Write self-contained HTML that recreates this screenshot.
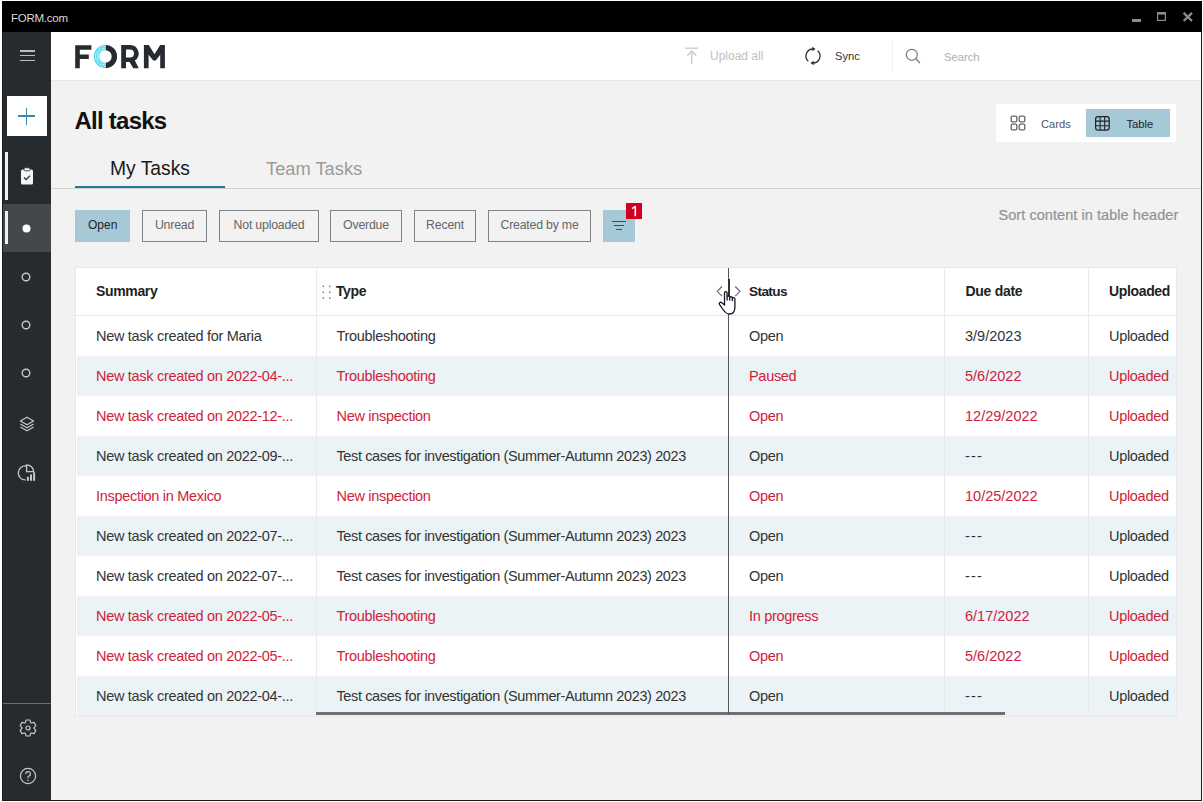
<!DOCTYPE html>
<html><head><meta charset="utf-8">
<style>
*{box-sizing:border-box;margin:0;padding:0}
html,body{width:1203px;height:802px;overflow:hidden;background:#fff;font-family:"Liberation Sans",sans-serif;position:relative}
.a{position:absolute}
.t{position:absolute;white-space:nowrap;line-height:1}
svg{position:absolute;overflow:visible}
</style></head><body>
<div class="a" style="left:2px;top:1px;width:1200px;height:800px;background:#f2f2f2;border:1px solid #1a1a1a"></div>
<div class="a" style="left:2px;top:1px;width:1200px;height:31px;background:#000;"></div>
<div class="t" style="left:11px;top:12.87px;font-size:11.5px;color:#d8d8d8;font-weight:400;letter-spacing:-0.25px">FORM.com</div>
<div class="a" style="left:1131.5px;top:18.8px;width:9px;height:3.1px;background:#8c8c8c;"></div>
<svg style="left:1157px;top:12px" width="9" height="9"><rect x="0.6" y="0.6" width="7.8" height="7.8" fill="none" stroke="#8c8c8c" stroke-width="1.2"/><rect x="0" y="0" width="9" height="2.6" fill="#8c8c8c"/></svg>
<svg style="left:1182px;top:12px" width="12" height="10"><path d="M1.6 0.9 L10 9 M10 0.9 L1.6 9" stroke="#8c8c8c" stroke-width="2.3"/></svg>
<div class="a" style="left:3px;top:32px;width:48px;height:768px;background:#262b2f;"></div>
<div class="a" style="left:19.7px;top:50.1px;width:15.7px;height:1.6px;background:#bdbdbd;"></div>
<div class="a" style="left:19.7px;top:54.9px;width:15.7px;height:1.6px;background:#bdbdbd;"></div>
<div class="a" style="left:19.7px;top:59.9px;width:15.7px;height:1.6px;background:#bdbdbd;"></div>
<div class="a" style="left:7px;top:96px;width:40px;height:40px;background:#fff;"></div>
<div class="a" style="left:18px;top:115.2px;width:17px;height:1.6px;background:#3a8aa5;"></div>
<div class="a" style="left:25.7px;top:108px;width:1.6px;height:16.6px;background:#3a8aa5;"></div>
<div class="a" style="left:5px;top:152px;width:3px;height:48px;background:#f0f0f0;"></div>
<svg style="left:20px;top:167px" width="14" height="18"><rect x="1" y="2.5" width="12" height="15" rx="1.5" fill="#f4f4f4"/><rect x="4" y="0.8" width="6" height="3" rx="1" fill="#f4f4f4" stroke="#262b2f" stroke-width="0.8"/><path d="M4 10.5 L6.2 12.6 L10 8.6" fill="none" stroke="#262b2f" stroke-width="1.3"/></svg>
<div class="a" style="left:3px;top:204px;width:48px;height:48px;background:#43484b;"></div>
<div class="a" style="left:5px;top:211px;width:3px;height:33px;background:#f0f0f0;"></div>
<svg style="left:22px;top:224px" width="9" height="9"><circle cx="4.5" cy="4.5" r="4" fill="#fff"/></svg>
<svg style="left:21px;top:271.5px" width="10" height="10"><circle cx="5" cy="5" r="3.8" fill="none" stroke="#c8c8c8" stroke-width="1.4"/></svg>
<svg style="left:21px;top:320.0px" width="10" height="10"><circle cx="5" cy="5" r="3.8" fill="none" stroke="#c8c8c8" stroke-width="1.4"/></svg>
<svg style="left:21px;top:368.0px" width="10" height="10"><circle cx="5" cy="5" r="3.8" fill="none" stroke="#c8c8c8" stroke-width="1.4"/></svg>
<svg style="left:18px;top:416px" width="18" height="17"><g fill="none" stroke="#c8c8c8" stroke-width="1.2" stroke-linejoin="round"><path d="M9 1.2 L15.6 5 L9 8.8 L2.4 5 Z"/><path d="M2.4 8 L9 11.8 L15.6 8"/><path d="M2.4 10.9 L9 14.7 L15.6 10.9"/></g></svg>
<svg style="left:18px;top:464px" width="20" height="18"><g fill="none" stroke="#c8c8c8" stroke-width="1.3"><path d="M8.4 2 A7 7 0 1 0 7.6 15.9"/><path d="M8.6 0.8 V7.6 H15.6 A7 7 0 0 0 8.6 0.8 Z"/></g><g fill="#c8c8c8"><rect x="8.9" y="12.8" width="2" height="4"/><rect x="12" y="10.5" width="2" height="6.3"/><rect x="15.1" y="8.3" width="2" height="8.5"/></g></svg>
<div class="a" style="left:3px;top:703px;width:48px;height:1px;background:#6a6e71;"></div>
<svg style="left:19px;top:719px" width="18" height="18"><path d="M6.28 3.65 L7.16 1.01 L10.84 1.01 L11.72 3.65 L12.27 3.97 L15.00 3.41 L16.84 6.60 L14.99 8.69 L14.99 9.31 L16.84 11.40 L15.00 14.59 L12.27 14.03 L11.72 14.35 L10.84 16.99 L7.16 16.99 L6.28 14.35 L5.73 14.03 L3.00 14.59 L1.16 11.40 L3.01 9.31 L3.01 8.69 L1.16 6.60 L3.00 3.41 L5.73 3.97 Z" fill="none" stroke="#c8c8c8" stroke-width="1.2" stroke-linejoin="round"/><circle cx="9" cy="9" r="2" fill="none" stroke="#c8c8c8" stroke-width="1.2"/></svg>
<svg style="left:19px;top:767px" width="18" height="18"><circle cx="9" cy="9" r="7.6" fill="none" stroke="#c8c8c8" stroke-width="1.2"/><path d="M6.8 7 A2.3 2.3 0 1 1 9.6 9.2 Q9 9.6 9 10.4 L9 11.3" fill="none" stroke="#c8c8c8" stroke-width="1.2"/><circle cx="9" cy="13.3" r="0.8" fill="#c8c8c8"/></svg>
<div class="a" style="left:51px;top:32px;width:1150px;height:48px;background:#fff;"></div>
<div class="a" style="left:51px;top:80px;width:1150px;height:1px;background:#e7e9e9;"></div>
<svg style="left:75px;top:44.5px" width="92" height="25">
<path d="M0.2 0.2 H16.4 V4.8 H4.8 V9.5 H13.8 V14.1 H4.8 V23.2 H0.2 Z" fill="#262b2f"/>
<path d="M30.5 -0.1 A11.6 11.6 0 0 1 30.5 23.1 L30.5 17.7 A6.2 6.2 0 0 0 30.5 5.3 Z" fill="#262b2f"/>
<path d="M30.5 -0.1 A11.6 11.6 0 0 0 30.5 23.1 L30.5 17.7 A6.2 6.2 0 0 1 30.5 5.3 Z" fill="#3dd5ea"/>
<path d="M30.5 1.4 A10.1 10.1 0 0 0 30.5 21.6" fill="none" stroke="#fff" stroke-width="0.7"/>
<path d="M30.5 3.1 A8.4 8.4 0 0 0 30.5 19.9" fill="none" stroke="#fff" stroke-width="0.7"/>
<path d="M30.5 4.7 A6.8 6.8 0 0 0 30.5 18.3" fill="none" stroke="#fff" stroke-width="0.6"/>
<path d="M46.2 0 H55 A8.5 8.5 0 0 1 59.8 15.6 L63.8 23.2 H58.2 L54.6 17 H51 V23.2 H46.2 Z M51 4.6 V12.6 H55 A4 4 0 0 0 55 4.6 Z" fill="#262b2f" fill-rule="evenodd"/>
<path d="M68.9 23.2 V0 H73.8 L79.5 9.3 L85.2 0 H89.9 V23.2 H85.2 V9.8 L80.8 15.4 H78.2 L73.6 9.8 V23.2 Z" fill="#262b2f"/>
</svg>
<svg style="left:685px;top:47px" width="14" height="18"><path d="M0.5 1.2 H13" stroke="#c4c4c4" stroke-width="1.2"/><path d="M6.8 4 V17" stroke="#c4c4c4" stroke-width="1.2"/><path d="M2.3 8.5 L6.8 4 L11.3 8.5" fill="none" stroke="#c4c4c4" stroke-width="1.2"/></svg>
<div class="t" style="left:710px;top:50.14px;font-size:12px;color:#c0c0c0;font-weight:400;">Upload all</div>
<svg style="left:804px;top:46px" width="19" height="20"><g fill="none" stroke="#333" stroke-width="1.3"><path d="M9 3 A7 7 0 0 0 4.3 15.2"/><path d="M13.6 4.7 A7 7 0 0 1 9 17"/></g><path d="M8.2 0.7 L11.6 3 L8.2 5.3 Z" fill="#333"/><path d="M9.8 14.7 L6.4 17 L9.8 19.3 Z" fill="#333"/></svg>
<div class="t" style="left:835px;top:50.82px;font-size:11.2px;color:#333;font-weight:400;">Sync</div>
<div class="a" style="left:892px;top:40px;width:1px;height:32px;background:#efefef;"></div>
<svg style="left:905px;top:48px" width="17" height="17"><circle cx="6.8" cy="6.8" r="5.5" fill="none" stroke="#777" stroke-width="1.2"/><path d="M10.8 10.8 L15 15" stroke="#777" stroke-width="1.3"/></svg>
<div class="t" style="left:944px;top:51.72px;font-size:11.2px;color:#aeaeae;font-weight:400;">Search</div>
<div class="t" style="left:74.5px;top:108.68px;font-size:24px;color:#111;font-weight:700;letter-spacing:-0.75px">All tasks</div>
<div class="a" style="left:996px;top:104px;width:180px;height:38px;background:#fff;"></div>
<div class="a" style="left:1086px;top:109px;width:84px;height:28px;background:#a5c9d7;"></div>
<svg style="left:1010px;top:115px" width="16" height="16"><g fill="none" stroke="#666" stroke-width="1.3"><rect x="1.2" y="1.2" width="5.6" height="5.6" rx="1.3"/><rect x="9.2" y="1.2" width="5.6" height="5.6" rx="1.3"/><rect x="1.2" y="9.2" width="5.6" height="5.6" rx="1.3"/><rect x="9.2" y="9.2" width="5.6" height="5.6" rx="1.3"/></g></svg>
<div class="t" style="left:1041px;top:118.82px;font-size:11.2px;color:#555;font-weight:400;">Cards</div>
<svg style="left:1094.5px;top:115.5px" width="15" height="15"><g fill="none" stroke="#222" stroke-width="1.25"><rect x="0.6" y="0.6" width="13.6" height="13.6" rx="2.6"/><path d="M5.1 0.6 V14.2 M9.7 0.6 V14.2 M0.6 5.1 H14.2 M0.6 9.7 H14.2" stroke-width="1.1"/></g></svg>
<div class="t" style="left:1126.5px;top:118.82px;font-size:11.2px;color:#222;font-weight:400;">Table</div>
<div class="t" style="left:110px;top:158.96px;font-size:19.3px;color:#1a1a1a;font-weight:400;">My Tasks</div>
<div class="t" style="left:266px;top:159.81px;font-size:18.3px;color:#9a9a9a;font-weight:400;">Team Tasks</div>
<div class="a" style="left:51px;top:188px;width:1150px;height:1px;background:#d0d0d0;"></div>
<div class="a" style="left:75px;top:186px;width:150px;height:2.2px;background:#1f7b9b;"></div>
<div class="a" style="left:75px;top:210px;width:55px;height:32px;background:#a5c9d7;"></div>
<div class="t" style="left:88px;top:219.44px;font-size:12px;color:#222;font-weight:400;">Open</div>
<div class="a" style="left:142px;top:210px;width:65px;height:32px;background:transparent;border:1.5px solid #808386"></div>
<div class="t" style="left:142px;top:219.19px;width:65px;text-align:center;font-size:12.3px;letter-spacing:-0.2px;color:#666">Unread</div>
<div class="a" style="left:219px;top:210px;width:100px;height:32px;background:transparent;border:1.5px solid #808386"></div>
<div class="t" style="left:219px;top:219.19px;width:100px;text-align:center;font-size:12.3px;letter-spacing:-0.2px;color:#666">Not uploaded</div>
<div class="a" style="left:330px;top:210px;width:72px;height:32px;background:transparent;border:1.5px solid #808386"></div>
<div class="t" style="left:330px;top:219.19px;width:72px;text-align:center;font-size:12.3px;letter-spacing:-0.2px;color:#666">Overdue</div>
<div class="a" style="left:414px;top:210px;width:62px;height:32px;background:transparent;border:1.5px solid #808386"></div>
<div class="t" style="left:414px;top:219.19px;width:62px;text-align:center;font-size:12.3px;letter-spacing:-0.2px;color:#666">Recent</div>
<div class="a" style="left:488px;top:210px;width:103px;height:32px;background:transparent;border:1.5px solid #808386"></div>
<div class="t" style="left:488px;top:219.19px;width:103px;text-align:center;font-size:12.3px;letter-spacing:-0.2px;color:#666">Created by me</div>
<div class="a" style="left:603px;top:210px;width:32px;height:32px;background:#a5c9d7;"></div>
<div class="a" style="left:612px;top:221.1px;width:14px;height:1.3px;background:#4a4a4a;"></div>
<div class="a" style="left:614px;top:225px;width:10px;height:1.3px;background:#4a4a4a;"></div>
<div class="a" style="left:616px;top:229px;width:6px;height:1.3px;background:#4a4a4a;"></div>
<div class="a" style="left:626px;top:203px;width:16px;height:16px;background:#d1001d;"></div>
<svg style="left:626px;top:203px" width="16" height="16"><path d="M9.3 3.3 V13.2" stroke="#fff" stroke-width="1.6"/><path d="M6 5.6 L9.4 3.4" stroke="#fff" stroke-width="1.3"/></svg>
<div class="t" style="left:998.5px;top:208.23px;font-size:14.5px;color:#8f9398;font-weight:400;-webkit-text-stroke:0.2px #8f9398;letter-spacing:0.06px">Sort content in table header</div>
<div class="a" style="left:75px;top:267px;width:1102px;height:450px;background:#fff;border:1px solid #e6e8e9"></div>
<div class="a" style="left:77px;top:356px;width:1099px;height:40px;background:#ebf3f6;"></div>
<div class="a" style="left:77px;top:436px;width:1099px;height:40px;background:#ebf3f6;"></div>
<div class="a" style="left:77px;top:516px;width:1099px;height:40px;background:#ebf3f6;"></div>
<div class="a" style="left:77px;top:596px;width:1099px;height:40px;background:#ebf3f6;"></div>
<div class="a" style="left:77px;top:676px;width:1099px;height:40px;background:#ebf3f6;"></div>
<div class="a" style="left:75px;top:315px;width:1101px;height:1px;background:#e6e9ea;"></div>
<div class="a" style="left:316px;top:268px;width:1px;height:448px;background:#e8ebec;"></div>
<div class="a" style="left:944px;top:268px;width:1px;height:448px;background:#e8ebec;"></div>
<div class="a" style="left:1088px;top:268px;width:1px;height:448px;background:#e8ebec;"></div>
<div class="t" style="left:96px;top:284.45px;font-size:14px;color:#222;font-weight:700;letter-spacing:-0.35px">Summary</div>
<svg style="left:322px;top:285px" width="10" height="14"><g fill="#8a8a8a"><rect x="0.5" y="0.5" width="1.6" height="1.6"/><rect x="7" y="0.5" width="1.6" height="1.6"/><rect x="0.5" y="6.5" width="1.6" height="1.6"/><rect x="7" y="6.5" width="1.6" height="1.6"/><rect x="0.5" y="12.3" width="1.6" height="1.6"/><rect x="7" y="12.3" width="1.6" height="1.6"/></g></svg>
<div class="t" style="left:336px;top:284.45px;font-size:14px;color:#222;font-weight:700;letter-spacing:-0.4px">Type</div>
<div class="t" style="left:749px;top:284.79px;font-size:13.6px;color:#222;font-weight:700;letter-spacing:-0.6px">Status</div>
<div class="t" style="left:965.5px;top:284.45px;font-size:14px;color:#222;font-weight:700;letter-spacing:-0.3px">Due date</div>
<div class="t" style="left:1109px;top:284.45px;font-size:14px;color:#222;font-weight:700;letter-spacing:-0.35px">Uploaded</div>
<div class="t" style="left:96px;top:328.73px;font-size:14.5px;color:#333;font-weight:400;letter-spacing:-0.3px">New task created for Maria</div>
<div class="t" style="left:336.5px;top:328.73px;font-size:14.5px;color:#333;font-weight:400;letter-spacing:-0.3px">Troubleshooting</div>
<div class="t" style="left:749px;top:328.73px;font-size:14.5px;color:#333;font-weight:400;letter-spacing:-0.3px">Open</div>
<div class="t" style="left:965px;top:328.73px;font-size:14.5px;color:#333;font-weight:400;letter-spacing:0px">3/9/2023</div>
<div class="t" style="left:1109px;top:328.73px;font-size:14.5px;color:#333;font-weight:400;letter-spacing:-0.3px">Uploaded</div>
<div class="t" style="left:96px;top:368.73px;font-size:14.5px;color:#d0213b;font-weight:400;letter-spacing:-0.3px">New task created on 2022-04-...</div>
<div class="t" style="left:336.5px;top:368.73px;font-size:14.5px;color:#d0213b;font-weight:400;letter-spacing:-0.3px">Troubleshooting</div>
<div class="t" style="left:749px;top:368.73px;font-size:14.5px;color:#d0213b;font-weight:400;letter-spacing:-0.3px">Paused</div>
<div class="t" style="left:965px;top:368.73px;font-size:14.5px;color:#d0213b;font-weight:400;letter-spacing:0px">5/6/2022</div>
<div class="t" style="left:1109px;top:368.73px;font-size:14.5px;color:#d0213b;font-weight:400;letter-spacing:-0.3px">Uploaded</div>
<div class="t" style="left:96px;top:408.73px;font-size:14.5px;color:#d0213b;font-weight:400;letter-spacing:-0.3px">New task created on 2022-12-...</div>
<div class="t" style="left:336.5px;top:408.73px;font-size:14.5px;color:#d0213b;font-weight:400;letter-spacing:-0.3px">New inspection</div>
<div class="t" style="left:749px;top:408.73px;font-size:14.5px;color:#d0213b;font-weight:400;letter-spacing:-0.3px">Open</div>
<div class="t" style="left:965px;top:408.73px;font-size:14.5px;color:#d0213b;font-weight:400;letter-spacing:0px">12/29/2022</div>
<div class="t" style="left:1109px;top:408.73px;font-size:14.5px;color:#d0213b;font-weight:400;letter-spacing:-0.3px">Uploaded</div>
<div class="t" style="left:96px;top:448.73px;font-size:14.5px;color:#333;font-weight:400;letter-spacing:-0.3px">New task created on 2022-09-...</div>
<div class="t" style="left:336.5px;top:448.73px;font-size:14.5px;color:#333;font-weight:400;letter-spacing:-0.38px">Test cases for investigation (Summer-Autumn 2023) 2023</div>
<div class="t" style="left:749px;top:448.73px;font-size:14.5px;color:#333;font-weight:400;letter-spacing:-0.3px">Open</div>
<div class="t" style="left:965px;top:448.73px;font-size:14.5px;color:#333;font-weight:400;letter-spacing:1.2px">---</div>
<div class="t" style="left:1109px;top:448.73px;font-size:14.5px;color:#333;font-weight:400;letter-spacing:-0.3px">Uploaded</div>
<div class="t" style="left:96px;top:488.73px;font-size:14.5px;color:#d0213b;font-weight:400;letter-spacing:-0.3px">Inspection in Mexico</div>
<div class="t" style="left:336.5px;top:488.73px;font-size:14.5px;color:#d0213b;font-weight:400;letter-spacing:-0.3px">New inspection</div>
<div class="t" style="left:749px;top:488.73px;font-size:14.5px;color:#d0213b;font-weight:400;letter-spacing:-0.3px">Open</div>
<div class="t" style="left:965px;top:488.73px;font-size:14.5px;color:#d0213b;font-weight:400;letter-spacing:0px">10/25/2022</div>
<div class="t" style="left:1109px;top:488.73px;font-size:14.5px;color:#d0213b;font-weight:400;letter-spacing:-0.3px">Uploaded</div>
<div class="t" style="left:96px;top:528.73px;font-size:14.5px;color:#333;font-weight:400;letter-spacing:-0.3px">New task created on 2022-07-...</div>
<div class="t" style="left:336.5px;top:528.73px;font-size:14.5px;color:#333;font-weight:400;letter-spacing:-0.38px">Test cases for investigation (Summer-Autumn 2023) 2023</div>
<div class="t" style="left:749px;top:528.73px;font-size:14.5px;color:#333;font-weight:400;letter-spacing:-0.3px">Open</div>
<div class="t" style="left:965px;top:528.73px;font-size:14.5px;color:#333;font-weight:400;letter-spacing:1.2px">---</div>
<div class="t" style="left:1109px;top:528.73px;font-size:14.5px;color:#333;font-weight:400;letter-spacing:-0.3px">Uploaded</div>
<div class="t" style="left:96px;top:568.73px;font-size:14.5px;color:#333;font-weight:400;letter-spacing:-0.3px">New task created on 2022-07-...</div>
<div class="t" style="left:336.5px;top:568.73px;font-size:14.5px;color:#333;font-weight:400;letter-spacing:-0.38px">Test cases for investigation (Summer-Autumn 2023) 2023</div>
<div class="t" style="left:749px;top:568.73px;font-size:14.5px;color:#333;font-weight:400;letter-spacing:-0.3px">Open</div>
<div class="t" style="left:965px;top:568.73px;font-size:14.5px;color:#333;font-weight:400;letter-spacing:1.2px">---</div>
<div class="t" style="left:1109px;top:568.73px;font-size:14.5px;color:#333;font-weight:400;letter-spacing:-0.3px">Uploaded</div>
<div class="t" style="left:96px;top:608.73px;font-size:14.5px;color:#d0213b;font-weight:400;letter-spacing:-0.3px">New task created on 2022-05-...</div>
<div class="t" style="left:336.5px;top:608.73px;font-size:14.5px;color:#d0213b;font-weight:400;letter-spacing:-0.3px">Troubleshooting</div>
<div class="t" style="left:749px;top:608.73px;font-size:14.5px;color:#d0213b;font-weight:400;letter-spacing:-0.3px">In progress</div>
<div class="t" style="left:965px;top:608.73px;font-size:14.5px;color:#d0213b;font-weight:400;letter-spacing:0px">6/17/2022</div>
<div class="t" style="left:1109px;top:608.73px;font-size:14.5px;color:#d0213b;font-weight:400;letter-spacing:-0.3px">Uploaded</div>
<div class="t" style="left:96px;top:648.73px;font-size:14.5px;color:#d0213b;font-weight:400;letter-spacing:-0.3px">New task created on 2022-05-...</div>
<div class="t" style="left:336.5px;top:648.73px;font-size:14.5px;color:#d0213b;font-weight:400;letter-spacing:-0.3px">Troubleshooting</div>
<div class="t" style="left:749px;top:648.73px;font-size:14.5px;color:#d0213b;font-weight:400;letter-spacing:-0.3px">Open</div>
<div class="t" style="left:965px;top:648.73px;font-size:14.5px;color:#d0213b;font-weight:400;letter-spacing:0px">5/6/2022</div>
<div class="t" style="left:1109px;top:648.73px;font-size:14.5px;color:#d0213b;font-weight:400;letter-spacing:-0.3px">Uploaded</div>
<div class="t" style="left:96px;top:688.73px;font-size:14.5px;color:#333;font-weight:400;letter-spacing:-0.3px">New task created on 2022-04-...</div>
<div class="t" style="left:336.5px;top:688.73px;font-size:14.5px;color:#333;font-weight:400;letter-spacing:-0.38px">Test cases for investigation (Summer-Autumn 2023) 2023</div>
<div class="t" style="left:749px;top:688.73px;font-size:14.5px;color:#333;font-weight:400;letter-spacing:-0.3px">Open</div>
<div class="t" style="left:965px;top:688.73px;font-size:14.5px;color:#333;font-weight:400;letter-spacing:1.2px">---</div>
<div class="t" style="left:1109px;top:688.73px;font-size:14.5px;color:#333;font-weight:400;letter-spacing:-0.3px">Uploaded</div>
<div class="a" style="left:316px;top:712px;width:689px;height:3px;background:#6f6f6f;"></div>
<div class="a" style="left:728px;top:268px;width:1px;height:446px;background:#555;"></div>
<div class="a" style="left:727.6px;top:279px;width:2px;height:17px;background:#333;"></div>
<svg style="left:715px;top:285px" width="28" height="32"><path d="M7 1.5 L2.2 6.3 L7 11.1" fill="none" stroke="#666" stroke-width="1.1"/><path d="M20.2 1.5 L25 6.3 L20.2 11.1" fill="none" stroke="#666" stroke-width="1.1"/><path d="M9.5 20 V8 A1.3 1.3 0 0 1 12.1 8 V15 V12.3 A1.3 1.3 0 0 1 14.7 12.3 V15 V13 A1.3 1.3 0 0 1 17.3 13 V15.5 V14 A1.3 1.3 0 0 1 19.9 14 V22 C19.9 26 18 29 14.5 29 C11.5 29 10 27.5 8 24.5 L4.6 19.6 A1.4 1.4 0 0 1 6.8 17.8 Z" fill="#fff" stroke="#16162a" stroke-width="1.3" stroke-linejoin="round"/></svg>
</body></html>
